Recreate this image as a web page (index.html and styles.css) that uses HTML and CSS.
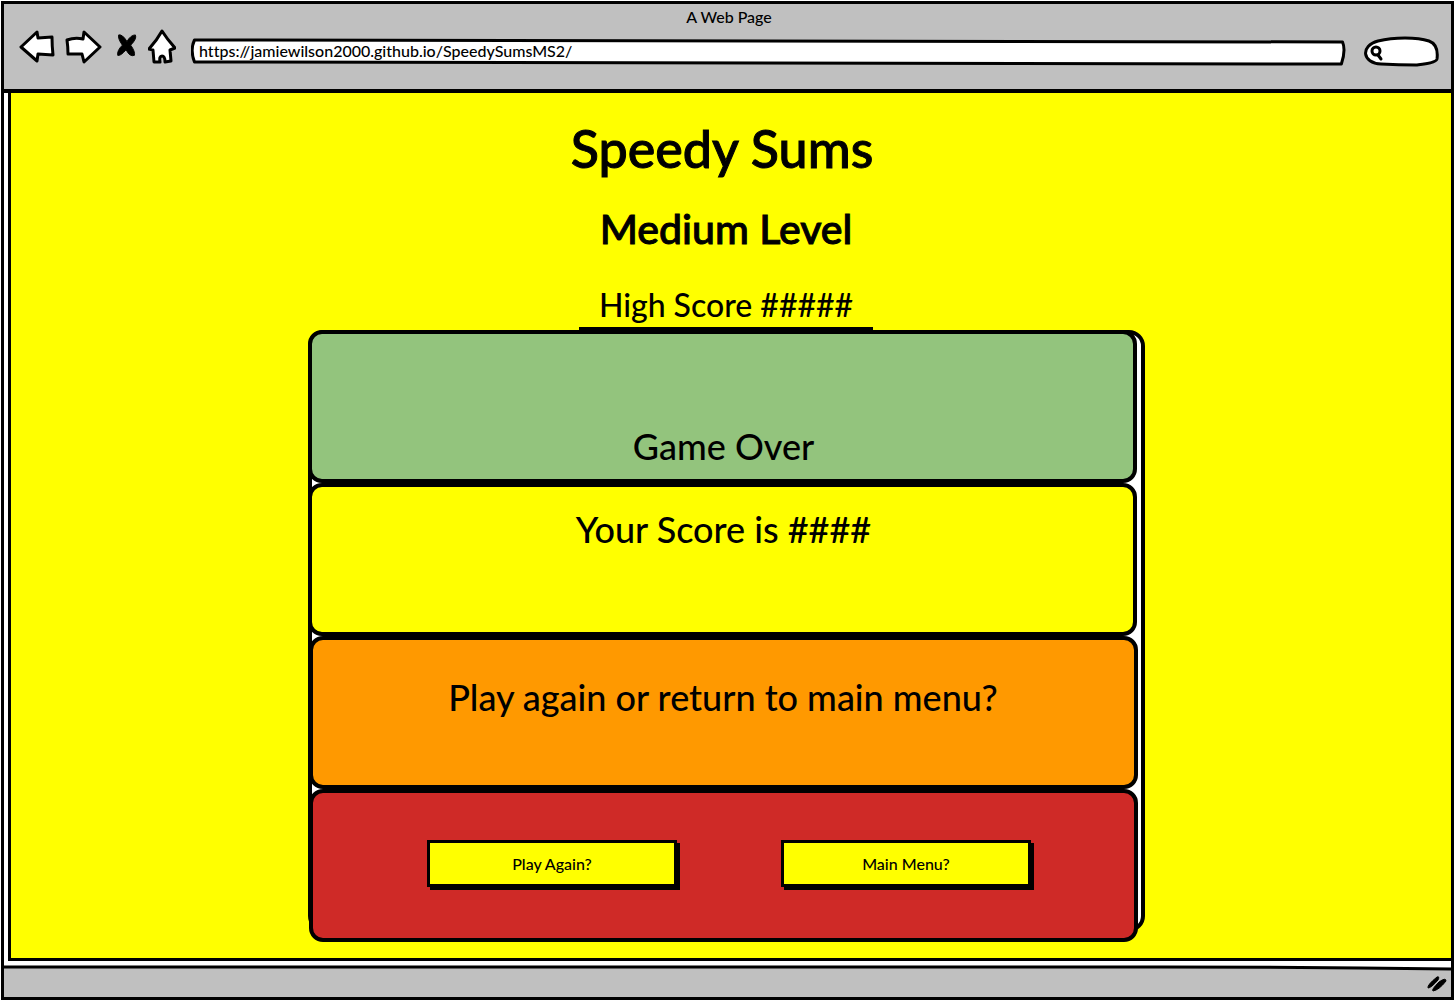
FILE: index.html
```html
<!DOCTYPE html>
<html lang="en">
<head>
<meta charset="utf-8">
<title>Speedy Sums</title>
<link rel="stylesheet" href="styles.css">
</head>
<body>
<div class="window">
  <header class="chrome">
    <div class="chrome-title">A Web Page</div>
    <div class="toolbar">
      <nav class="nav-buttons" aria-label="Browser">
        <button class="icon-button" type="button" aria-label="Back"><svg width="36" height="34" viewBox="0 0 36 34"><path class="sketch" d="M2 17 18 2 19 8 33 7Q33 16 34 25L19 24 18 31Z"/></svg></button>
        <button class="icon-button" type="button" aria-label="Forward"><svg width="37" height="34" viewBox="0 0 37 34"><path class="sketch" d="M35 17 19 2 18 9Q10 7 2 10Q3 17 3 24L17 24 19 32Z"/></svg></button>
        <button class="icon-button stop" type="button" aria-label="Stop"><svg width="22" height="26" viewBox="0 0 22 28"><path d="M2 1Q6 0 11 8Q15 1 20 1Q22 5 15 12Q20 19 19 23Q14 25 10 17Q4 24 1 23Q0 18 6 12Q1 5 2 1Z" stroke="#000" stroke-width="1" stroke-linejoin="round"/></svg></button>
        <button class="icon-button" type="button" aria-label="Home"><svg width="28" height="36" viewBox="1 1 28 36"><path class="sketch" d="M15 3Q20 11 28 20L23 22 24 33 18 34Q18 28 15 28Q12 28 13 34L7 34 6 22 2 21Q10 12 15 3Z"/></svg></button>
      </nav>
      <div class="address">
        <svg class="outline" viewBox="0 0 100 28" preserveAspectRatio="none" aria-hidden="true"><path class="sketch" d="M.3 2 99.7 4Q100 12 99.6 26L.3 24Q-.1 12 .3 2Z"/></svg>
        <input class="address-input" type="text" aria-label="Address" value="https://jamiewilson2000.github.io/SpeedySumsMS2/">
      </div>
      <div class="search">
        <svg class="outline" viewBox="0 0 75 31" aria-hidden="true"><path class="sketch" d="M17 28C-2 27-4 10 14 5C30 1 53 1 65 5C73 8 74 15 73 23C72 27 60 28 52 29Q35 29 17 28Z"/><path class="sketch" d="M14 19 17 23"/><circle class="sketch" cx="12" cy="15" r="4"/></svg>
        <input class="search-input" type="search" aria-label="Search">
      </div>
    </div>
  </header>
  <main class="page">
    <div class="game">
      <h1 class="title">Speedy Sums</h1>
      <h2 class="level">Medium Level</h2>
      <p class="high-score">High Score #####</p>
      <div class="board">
        <section class="tile green"><p>Game Over</p></section>
        <section class="tile yellow"><p>Your Score is ####</p></section>
        <section class="tile orange"><p>Play again or return to main menu?</p></section>
        <section class="tile red">
          <button class="choice" type="button">Play Again?</button>
          <button class="choice" type="button">Main Menu?</button>
        </section>
      </div>
    </div>
  </main>
  <footer class="status">
    <svg class="status-line" viewBox="0 0 100 6" preserveAspectRatio="none" aria-hidden="true"><path class="gray" d="M0 2 80 2 100 4V6H0Z"/><path class="line" d="M0 2 80 2Q90 2 100 4"/></svg>
    <svg class="grip" width="20" height="16" viewBox="0 0 20 16" aria-hidden="true"><path d="M1 12Q0 9 10 1Q13 0 11 4Q4 12 1 12ZM6 15Q4 14 12 6Q19 1 19 5Q12 14 6 15Z" stroke="#000" stroke-width="1"/></svg>
  </footer>
</div>
</body>
</html>
```
FILE: styles.css
```css
* { box-sizing: border-box; }

body {
  margin: 0;
  padding: 1px 1px 2px;
  font-family: Lato, "Open Sans", sans-serif;
  font-weight: 500;
  font-variant-ligatures: none;
  color: #000;
  background: #fff;
}

h1, h2, p { margin: 0; font-weight: 500; }

h1, h2 { -webkit-text-stroke: 1px #000; }

button { padding: 0; font: inherit; color: inherit; cursor: pointer; }

.window {
  display: flex;
  flex-direction: column;
  min-height: calc(100vh - 3px);
  border: 3px solid #000;
}

.sketch {
  fill: #fff;
  stroke: #000;
  stroke-width: 3px;
  stroke-linejoin: round;
  stroke-linecap: round;
  vector-effect: non-scaling-stroke;
}

.chrome {
  padding: 2px 12px 23px 15px;
  background: #c0c0c0;
  border-bottom: 4px solid #000;
}

.chrome-title {
  font-size: 16px;
  line-height: 22px;
  text-align: center;
}

.toolbar {
  display: flex;
  align-items: center;
  gap: 18px;
  height: 38px;
}

.nav-buttons { display: flex; align-items: center; gap: 10px; }

.icon-button {
  display: flex;
  background: none;
  border: 0;
}

.stop { margin-left: 4px; }

.address { position: relative; flex: 1; height: 28px; margin: 10px 0 0 -3px; }

.search { position: relative; width: 75px; height: 31px; margin-top: 8px; }

.outline {
  position: absolute;
  inset: 0;
  width: 100%;
  height: 100%;
}

.address-input, .search-input {
  position: relative;
  width: 100%;
  height: 100%;
  padding: 0 8px 4px;
  font: inherit;
  font-size: 16px;
  color: inherit;
  background: none;
  border: 0;
  outline: 0;
}

.search-input { padding-left: 22px; }

.page {
  flex: 1;
  margin: 0 0 4px 4px;
  padding: 23px 10px 16px 0;
  background: #ff0;
  border-left: 3px solid #000;
  border-bottom: 3px solid #000;
}

.game {
  display: flex;
  flex-direction: column;
  align-items: center;
  width: 837px;
  max-width: 100%;
  margin: 0 auto;
}

.title { font-size: 52px; line-height: 64px; padding-right: 8px; }

.level { margin-top: 22px; font-size: 41px; line-height: 54px; }

.high-score {
  margin-top: 29px;
  padding: 0 20px 2px;
  font-size: 32px;
  line-height: 40px;
  border-bottom: 3px solid #000;
}

.board {
  position: relative;
  align-self: stretch;
  padding-right: 8px;
}

.board::before {
  content: "";
  position: absolute;
  inset: 0 0 10px;
  background: #fff;
  border: 4px solid #000;
  border-radius: 16px;
}

.tile {
  position: relative;
  display: flex;
  justify-content: center;
  height: 153px;
  font-size: 36px;
  line-height: 44px;
  border: 4px solid #000;
  border-radius: 14px;
}

.green { padding: 90px 0 0 3px; background: #93c47d; }
.yellow { padding: 20px 0 0 3px; background: #ff0; }
.orange { padding: 35px 0 0; background: #f90; }
.red { gap: 104px; padding: 47px 0 0 12px; background: #cf2a27; }

.orange, .red { margin: 0 -1px 0 1px; }

.choice {
  width: 250px;
  height: 47px;
  font-size: 16px;
  line-height: 20px;
  background: #ff0;
  border: 3px solid #000;
  box-shadow: 3px 3px 0 #000;
}

.status {
  position: relative;
  display: flex;
  justify-content: flex-end;
  height: 32px;
  padding: 11px 4px 0;
  background: #c0c0c0;
}

.status-line {
  position: absolute;
  inset: 0 0 auto;
  width: 100%;
  height: 6px;
  background: #fff;
}

.gray { fill: #c0c0c0; }

.line {
  fill: none;
  stroke: #000;
  stroke-width: 3px;
  vector-effect: non-scaling-stroke;
}

.grip { position: relative; }
```
